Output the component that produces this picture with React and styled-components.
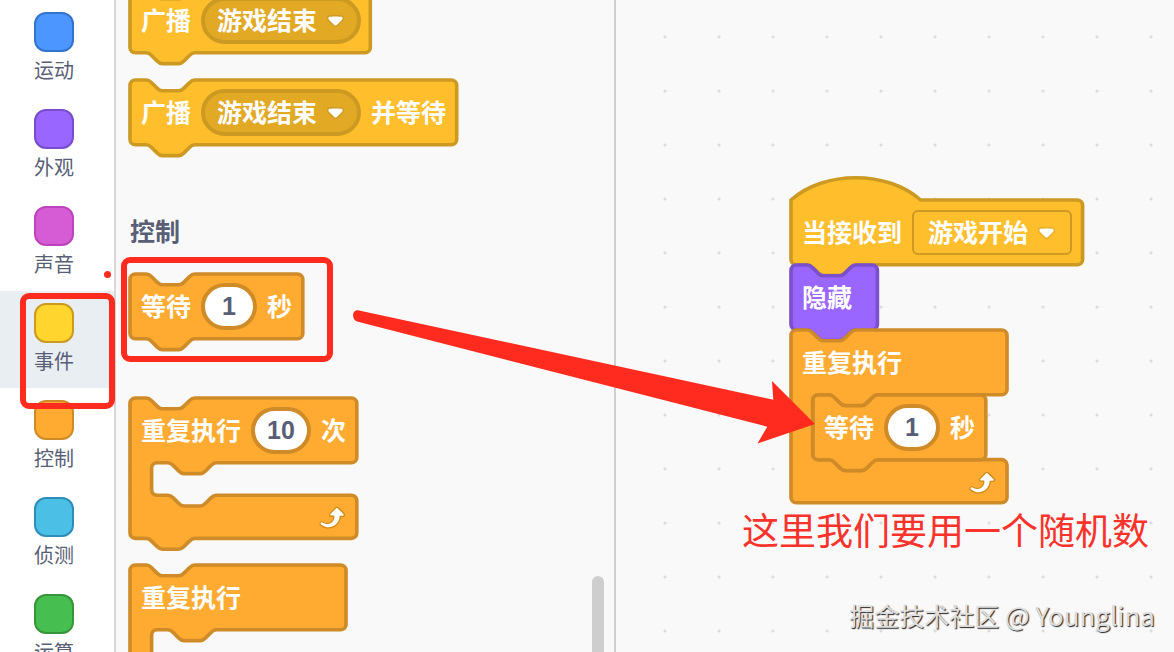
import React, { useState } from "react";
import styled, { createGlobalStyle } from "styled-components";

// block shapes are written in block units, one unit is 1.35px on screen
const SCALE = 1.35;

const COLORS = {
  event: { fill: "#ffbf2d", line: "#cc9a22", field: "#e2a925" },
  control: { fill: "#ffab32", line: "#cf8b27", field: "#ffffff" },
  looks: { fill: "#9966ff", line: "#7a50cc", field: "#855cd6" },
};

const CATEGORIES = [
  { name: "运动", fill: "#4c97ff", line: "#3373cc" },
  { name: "外观", fill: "#9966ff", line: "#774dcb" },
  { name: "声音", fill: "#d65cd6", line: "#bd42bd" },
  { name: "事件", fill: "#ffd52e", line: "#cc9a22" },
  { name: "控制", fill: "#ffab32", line: "#cf8b27" },
  { name: "侦测", fill: "#4cbfe6", line: "#2e8eb8" },
  { name: "运算", fill: "#46be50", line: "#389438" },
];

const NOTCH = "c 2 0 3 1 4 2 l 4 4 c 1 1 2 2 4 2 h 12 c 2 0 3 -1 4 -2 l 4 -4 c 1 -1 2 -2 4 -2";
const TAB = "c -2 0 -3 1 -4 2 l -4 4 c -1 1 -2 2 -4 2 h -12 c -2 0 -3 -1 -4 -2 l -4 -4 c -1 -1 -2 -2 -4 -2";

function blockPath({ width, mouth, hat, cap }) {
  const right = width - 4;
  let d = hat
    ? "M 0 0 c 25 -22 71 -22 96 0 "
    : `M 0 4 a 4 4 0 0 1 4 -4 H 12 ${NOTCH} `;
  d += `H ${right} a 4 4 0 0 1 4 4 v 40 a 4 4 0 0 1 -4 4 `;
  if (mouth) {
    d += `H 64 ${TAB} h -8 a 4 4 0 0 0 -4 4 v ${mouth - 8} a 4 4 0 0 0 4 4 h 8 ${NOTCH} `;
    d += `H ${right} a 4 4 0 0 1 4 4 v 24 a 4 4 0 0 1 -4 4 `;
  }
  if (!cap) {
    d += `H 48 ${TAB} `;
  }
  return `${d} H 4 a 4 4 0 0 1 -4 -4 z`;
}

function Block({ kind, width, mouth, hat, cap, label, children }) {
  const color = COLORS[kind];
  return (
    <BlockBox $width={Math.round(width * SCALE)}>
      <Shape aria-hidden="true">
        <path
          d={blockPath({ width, mouth, hat, cap })}
          transform={`scale(${SCALE})`}
          fill={color.fill}
          stroke={color.line}
          strokeWidth="2.7"
        />
      </Shape>
      <BlockRow>{label}</BlockRow>
      {mouth && (
        <>
          <Mouth>{children}</Mouth>
          <Foot>
            <LoopIcon />
          </Foot>
        </>
      )}
    </BlockBox>
  );
}

function LoopIcon() {
  return (
    <svg width="32" height="32" viewBox="0 0 24 24" aria-hidden="true">
      <path
        fill="#cf8b17"
        d="M23.3,11c-0.3,0.6-0.9,1-1.5,1h-1.6c-0.1,1.3-0.5,2.5-1.1,3.6c-0.9,1.7-2.3,3.2-4.1,4.1c-1.7,0.9-3.6,1.2-5.5,0.9c-1.8-0.3-3.5-1.1-4.9-2.3c-0.7-0.7-0.7-1.9,0-2.6c0.6-0.6,1.6-0.7,2.3-0.2H7c0.9,0.6,1.9,0.9,2.9,0.9s1.9-0.3,2.7-0.9c1.1-0.8,1.8-2.1,1.8-3.5h-1.5c-0.9,0-1.7-0.7-1.7-1.7c0-0.4,0.2-0.9,0.5-1.2l4.4-4.4c0.7-0.6,1.7-0.6,2.4,0L23,9.2C23.5,9.7,23.6,10.4,23.3,11z"
      />
      <path
        fill="#fff"
        d="M21.8,11h-2.6c0,1.5-0.3,2.9-1,4.2c-0.8,1.6-2.1,2.8-3.7,3.6c-1.5,0.8-3.3,1.1-4.9,0.8c-1.6-0.2-3.2-1-4.4-2.1c-0.4-0.3-0.4-0.9-0.1-1.2c0.3-0.4,0.9-0.4,1.2-0.1l0,0c1,0.7,2.2,1.1,3.4,1.1s2.3-0.3,3.3-1c0.9-0.6,1.6-1.5,2-2.6c0.3-0.9,0.4-1.8,0.2-2.8h-2.4c-0.4,0-0.7-0.3-0.7-0.7c0-0.2,0.1-0.3,0.2-0.4l4.4-4.4c0.3-0.3,0.7-0.3,0.9,0L22,9.8c0.3,0.3,0.4,0.6,0.3,0.9S22,11,21.8,11z"
      />
    </svg>
  );
}

function MessageField({ value, square }) {
  return (
    <FieldBox $square={square}>
      <FieldSelect aria-label="消息" defaultValue={value}>
        <option>{value}</option>
      </FieldSelect>
      <svg width="17" height="12" viewBox="0 0 12.71 8.79" aria-hidden="true">
        <path
          fill="#231f20"
          opacity="0.1"
          d="M12.71,2.44A2.41,2.41,0,0,1,12,4.16L8.08,8.08a2.45,2.45,0,0,1-3.45,0L0.72,4.16A2.42,2.42,0,0,1,0,2.44,2.48,2.48,0,0,1,.71.71C1,0.47,1.43,0,6.36,0S11.75,0.46,12,.71A2.44,2.44,0,0,1,12.71,2.44Z"
        />
        <path
          fill="#fff"
          d="M6.36,7.79a1.43,1.43,0,0,1-1-.42L1.42,3.45a1.44,1.44,0,0,1,0-2c0.56-.56,9.31-0.56,9.87,0a1.44,1.44,0,0,1,0,2L7.37,7.37A1.43,1.43,0,0,1,6.36,7.79Z"
        />
      </svg>
    </FieldBox>
  );
}

function WaitBlock() {
  return (
    <Block
      kind="control"
      width={128}
      label={
        <>
          <Word>等待</Word>
          <NumberField aria-label="秒数" defaultValue="1" />
          <Word>秒</Word>
        </>
      }
    />
  );
}

export default function App() {
  const [selected, setSelected] = useState("事件");

  return (
    <Editor>
      <GlobalStyle />
      <Categories>
        {CATEGORIES.map((item) => (
          <CategoryButton
            key={item.name}
            type="button"
            $active={item.name === selected}
            onClick={() => setSelected(item.name)}
          >
            <Swatch $fill={item.fill} $line={item.line} />
            <span>{item.name}</span>
          </CategoryButton>
        ))}
      </Categories>

      <Palette>
        <BlockGroup>
          <Block
            kind="event"
            width={178}
            label={
              <>
                <Word>广播</Word>
                <MessageField value="游戏结束" />
              </>
            }
          />
          <Block
            kind="event"
            width={242}
            label={
              <>
                <Word>广播</Word>
                <MessageField value="游戏结束" />
                <Word>并等待</Word>
              </>
            }
          />
        </BlockGroup>
        <GroupTitle>控制</GroupTitle>
        <WaitBlock />
        <LoopGroup>
          <Block
            kind="control"
            width={168}
            mouth={24}
            label={
              <>
                <Word>重复执行</Word>
                <NumberField $wide aria-label="次数" defaultValue="10" />
                <Word>次</Word>
              </>
            }
          />
          <Block
            kind="control"
            width={160}
            mouth={24}
            cap
            label={<Word>重复执行</Word>}
          />
        </LoopGroup>
        <ScrollThumb />
      </Palette>

      <Workspace>
        <Script>
          <Block
            kind="event"
            width={216}
            hat
            label={
              <>
                <Word>当接收到</Word>
                <MessageField square value="游戏开始" />
              </>
            }
          />
          <Block kind="looks" width={64} label={<Word>隐藏</Word>} />
          <Block
            kind="control"
            width={160}
            mouth={48}
            cap
            label={<Word>重复执行</Word>}
          >
            <WaitBlock />
          </Block>
        </Script>
        <Note>这里我们要用一个随机数</Note>
        <Watermark>
          掘金技术社区 <Author>@ Younglina</Author>
        </Watermark>
      </Workspace>

      <CategoryMark />
      <BlockMark />
      <DotMark />
      <Arrow viewBox="0 0 470 140" width="470" height="140" aria-hidden="true">
        <path
          fill="#ff2b1f"
          d="M9 10.5 L423.3 99.7 L422 81 L465 124 L407.5 143.5 L417.3 126.7 L7 21.5 C1 19 2 9 9 10.5 Z"
        />
      </Arrow>
    </Editor>
  );
}

const GlobalStyle = createGlobalStyle`
  * {
    box-sizing: border-box;
  }
  body {
    margin: 0;
    overflow: hidden;
    font-family: "Noto Sans CJK SC", sans-serif;
  }
`;

const Editor = styled.div`
  position: relative;
  display: flex;
  height: 100vh;
  overflow: hidden;
  background-color: #f9f9f9;
`;

const Categories = styled.nav`
  flex: 0 0 116px;
  display: flex;
  flex-direction: column;
  background-color: #fff;
  border-right: 2px solid #d6d6d6;
`;

const CategoryButton = styled.button`
  flex: none;
  display: flex;
  flex-direction: column;
  align-items: center;
  gap: 4px;
  padding: 12px 6px 13px 0;
  border: 0;
  background-color: ${(props) => (props.$active ? "#e9eef2" : "transparent")};
  color: #575e75;
  font-family: inherit;
  font-size: 20px;
  line-height: 28px;
  cursor: pointer;
`;

const Swatch = styled.span`
  width: 40px;
  height: 40px;
  border: 2px solid ${(props) => props.$line};
  border-radius: 12px;
  background-color: ${(props) => props.$fill};
`;

const Palette = styled.section`
  position: relative;
  flex: 0 0 500px;
  display: flex;
  flex-direction: column;
  align-items: flex-start;
  padding-left: 14px;
  overflow: hidden;
  border-right: 2px solid #cfcfcf;
`;

/* the list is scrolled, so its first block is cut by the top edge */
const BlockGroup = styled.div`
  flex: none;
  display: flex;
  flex-direction: column;
  gap: 27px;
  margin-top: -12px;
`;

const LoopGroup = styled(BlockGroup)`
  margin-top: 59px;
`;

const GroupTitle = styled.h2`
  flex: none;
  margin: 67px 0 26px;
  color: #575e75;
  font-size: 25px;
  font-weight: 700;
  line-height: 36px;
`;

const BlockBox = styled.div`
  position: relative;
  flex: none;
  width: ${(props) => props.$width}px;
  color: #fff;
  font-size: 25px;
  font-weight: 700;
  line-height: 36px;
  white-space: nowrap;
`;

const Shape = styled.svg`
  position: absolute;
  inset: 0;
  width: 100%;
  height: 100%;
  overflow: visible;
`;

const BlockRow = styled.div`
  position: relative;
  display: flex;
  align-items: center;
  gap: 10px;
  height: 65px;
  padding-left: 11px;
`;

const Word = styled.span`
  padding-bottom: 4px;
`;

const Mouth = styled.div`
  position: relative;
  min-height: 32px;
  margin-left: 22px;
`;

const Foot = styled.div`
  position: relative;
  display: flex;
  align-items: center;
  justify-content: flex-end;
  height: 43px;
  padding-right: 11px;
`;

const FieldBox = styled.span`
  display: flex;
  align-items: center;
  gap: 9px;
  height: ${(props) => (props.$square ? 45 : 47)}px;
  padding: ${(props) => (props.$square ? "0 15px 0 14px" : "0 13px 0 12px")};
  border: ${(props) => (props.$square ? 2 : 4)}px solid ${COLORS.event.line};
  border-radius: ${(props) => (props.$square ? 6 : 24)}px;
  background-color: ${(props) =>
    props.$square ? COLORS.event.fill : COLORS.event.field};
`;

const FieldSelect = styled.select`
  appearance: none;
  padding: 0 0 4px;
  border: 0;
  background: transparent;
  color: #fff;
  font: inherit;
`;

const NumberField = styled.input`
  width: ${(props) => (props.$wide ? 60 : 56)}px;
  height: 47px;
  padding: 0;
  border: 4px solid ${COLORS.control.line};
  border-radius: 24px;
  background-color: ${COLORS.control.field};
  color: #575e75;
  font-family: "Liberation Sans", Arial, sans-serif;
  font-size: 25px;
  font-weight: 700;
  text-align: center;
`;

const ScrollThumb = styled.div`
  position: absolute;
  top: 576px;
  right: 10px;
  bottom: -12px;
  width: 12px;
  border-radius: 6px;
  background-color: #cecece;
`;

const Workspace = styled.main`
  position: relative;
  flex: 1;
  overflow: hidden;
  background-image: radial-gradient(circle, #dcdcdc 1px, transparent 2px);
  background-size: 54px 54px;
  background-position: 22px 10px;
`;

const Script = styled.div`
  position: absolute;
  top: 200px;
  left: 175px;
`;

const Note = styled.p`
  position: absolute;
  top: 502px;
  left: 126px;
  margin: 0;
  color: #f8332b;
  font-size: 37px;
  line-height: 54px;
  white-space: nowrap;
`;

const Watermark = styled.p`
  position: absolute;
  right: 19px;
  bottom: 19px;
  margin: 0;
  color: #dedede;
  font-size: 25px;
  line-height: 36px;
  text-shadow: 1px 1px 1px #222;
  white-space: nowrap;
`;

const Author = styled.span`
  font-size: 26px;
`;

const Mark = styled.div`
  position: absolute;
  border: 6px solid #ff2b1f;
  border-radius: 9px;
  pointer-events: none;
`;

const CategoryMark = styled(Mark)`
  top: 293px;
  left: 20px;
  width: 95px;
  height: 116px;
`;

const BlockMark = styled(Mark)`
  top: 257px;
  left: 121px;
  width: 212px;
  height: 105px;
`;

const DotMark = styled.div`
  position: absolute;
  top: 271px;
  left: 104px;
  width: 7px;
  height: 7px;
  border-radius: 50%;
  background-color: #ff2b1f;
`;

const Arrow = styled.svg`
  position: absolute;
  top: 300px;
  left: 350px;
  overflow: visible;
  pointer-events: none;
`;
